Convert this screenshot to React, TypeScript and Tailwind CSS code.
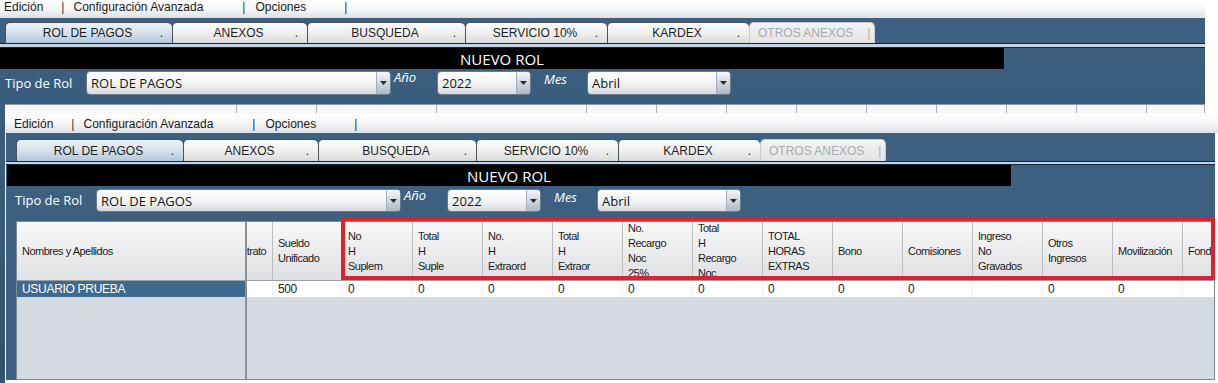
import React from 'react';

type TabKind = 'on' | 'off' | 'dis';

const TABS: { label: string; w: string; kind: TabKind }[] = [
  { label: 'ROL DE PAGOS', w: 'w-[167px]', kind: 'on' },
  { label: 'ANEXOS', w: 'w-[135px]', kind: 'off' },
  { label: 'BUSQUEDA', w: 'w-[158px]', kind: 'off' },
  { label: 'SERVICIO 10%', w: 'w-[142px]', kind: 'off' },
  { label: 'KARDEX', w: 'w-[142px]', kind: 'off' },
  { label: 'OTROS ANEXOS', w: 'w-[126px]', kind: 'dis' },
];

// columns to the right of the frozen "Nombres y Apellidos" column
const COLS: { w: string; lines: string[]; val: string; clip?: boolean }[] = [
  { w: 'w-[26px]', lines: ['Contrato'], val: '', clip: true },
  { w: 'w-[70px]', lines: ['Sueldo', 'Unificado'], val: '500' },
  { w: 'w-[70px]', lines: ['No', 'H', 'Suplem'], val: '0' },
  { w: 'w-[70px]', lines: ['Total', 'H', 'Suple'], val: '0' },
  { w: 'w-[70px]', lines: ['No.', 'H', 'Extraord'], val: '0' },
  { w: 'w-[70px]', lines: ['Total', 'H', 'Extraor'], val: '0' },
  { w: 'w-[70px]', lines: ['No.', 'Recargo', 'Noc', '25%'], val: '0' },
  { w: 'w-[70px]', lines: ['Total', 'H', 'Recargo', 'Noc'], val: '0' },
  { w: 'w-[70px]', lines: ['TOTAL', 'HORAS', 'EXTRAS'], val: '0' },
  { w: 'w-[70px]', lines: ['Bono'], val: '0' },
  { w: 'w-[70px]', lines: ['Comisiones'], val: '0' },
  { w: 'w-[70px]', lines: ['Ingreso', 'No', 'Gravados'], val: '' },
  { w: 'w-[70px]', lines: ['Otros', 'Ingresos'], val: '0' },
  { w: 'w-[70px]', lines: ['Movilización'], val: '0' },
  { w: 'w-[70px]', lines: ['Fondo'], val: '' },
];

const BACK_COLS = [
  'w-[232px]', 'w-[80px]', 'w-[120px]', 'w-[150px]',
  'w-[70px]', 'w-[70px]', 'w-[70px]', 'w-[70px]',
  'w-[70px]', 'w-[70px]', 'w-[70px]', 'w-[70px]', 'w-[58px]',
];

const MenuBar = ({ front }: { front: boolean }) => (
  <div
    className={`flex shrink-0 items-start bg-gradient-to-b from-[#ffffff] via-[#f6f7f8] to-[#dce1e6] text-[12px] leading-[14px] text-[#1a1a1a] font-['Liberation_Sans',Arial,sans-serif] ${
      front ? 'h-[20px] pl-[8px] pt-[4px] -mr-[3px]' : 'h-[18px] pl-[4px]'
    }`}
  >
    <span>Edición</span>
    <span className="ml-[18px] text-[#333333]">|</span>
    <span className="ml-[9px]">Configuración Avanzada</span>
    <span className="ml-[39px] text-[#333333]">|</span>
    <span className="ml-[10px]">Opciones</span>
    <span className="ml-[38px] text-[#333333]">|</span>
  </div>
);

const TabStrip = ({ front }: { front: boolean }) => (
  <div className={`flex shrink-0 ${front ? 'h-[28px] pl-[10px] pt-[6px]' : 'h-[25px] pl-[5px] pt-[4px]'}`}>
    {TABS.map((t) => {
      if (t.kind === 'dis') {
        return (
          <div
            key={t.label}
            className={`flex ${t.w} items-center rounded-t-[5px] border-x border-t border-[#c7cbd0] bg-gradient-to-b from-[#f4f4f4] to-[#e2e3e5] pl-[8px] text-[12px] text-[#a9abae] font-['Liberation_Sans',Arial,sans-serif]`}
          >
            <span>{t.label}</span>
            <span className="ml-[14px]">|</span>
          </div>
        );
      }
      return (
        <div
          key={t.label}
          className={`grid ${t.w} grid-cols-[1fr_auto_1fr] items-center rounded-t-[5px] border-l border-t border-[#4b525a] text-[12px] text-[#1e1e1e] font-['Liberation_Sans',Arial,sans-serif] ${
            t.kind === 'on'
              ? 'bg-gradient-to-b from-[#edf2f7] via-[#d6e1ec] to-[#b3c7da]'
              : 'bg-gradient-to-b from-[#fcfcfc] via-[#f0f0f0] to-[#d9dadc]'
          }`}
        >
          <span />
          <span className="-ml-[3px]">{t.label}</span>
          <span className="justify-self-end pr-[9px]">.</span>
        </div>
      );
    })}
  </div>
);

const Combo = ({ value, w, h }: { value: string; w: string; h: string }) => (
  <div
    className={`flex ${w} ${h} overflow-hidden rounded-[4px] border border-[#6e7c8a] bg-gradient-to-b from-[#ffffff] via-[#f3f4f5] to-[#d8dbdf]`}
  >
    <span className="flex flex-1 items-center pl-[4px] pt-[2px] text-[13px] text-[#141414] font-['Open_Sans',sans-serif]">
      {value}
    </span>
    <span className="flex w-[14px] items-center justify-center border-l border-[#a2aebb] bg-gradient-to-b from-[#f5f7f9] to-[#abbac8]">
      <svg width="7" height="4" viewBox="0 0 7 4">
        <path d="M0 0h7L3.5 4z" fill="#2b2b2b" />
      </svg>
    </span>
  </div>
);

const FilterRow = ({ front }: { front: boolean }) => {
  const h = front ? 'h-[23px]' : 'h-[24px]';
  return (
    <div
      className={`flex shrink-0 items-center text-[13px] text-white font-['Open_Sans',sans-serif] ${
        front ? 'mt-[2px] h-[25px] pl-[9px]' : 'mt-[1px] h-[26px] pl-[5px]'
      }`}
    >
      <span className="w-[81px] pt-[1px]">Tipo de Rol</span>
      <Combo value="ROL DE PAGOS" w="w-[305px]" h={h} />
      <span className="mt-[1px] w-[46px] self-start pl-[3px] italic leading-[13px]">Año</span>
      <Combo value="2022" w="w-[94px]" h={h} />
      <span className="mt-[3px] w-[56px] self-start pl-[13px] italic leading-[13px]">Mes</span>
      <Combo value="Abril" w="w-[144px]" h={h} />
    </div>
  );
};

const FrontTable = () => (
  <div className="ml-[10px] mt-[8px] flex min-h-0 flex-1 border border-[#7d8995] bg-[#d5d9e0] text-[11px] tracking-[-0.5px] text-[#1b1b1b] font-['Liberation_Sans',Arial,sans-serif]">
    <div className="flex w-[230px] shrink-0 flex-col border-r-2 border-[#8c9095]">
      <div className="flex h-[59px] items-center border-b border-[#9b9fa4] bg-gradient-to-b from-[#f8f8f8] to-[#e0e1e4] pl-[5px]">
        Nombres y Apellidos
      </div>
      <div className="flex h-[16px] items-center bg-[#3f6a8f] pl-[5px] text-[12px] tracking-[-0.3px] text-white">
        USUARIO PRUEBA
      </div>
    </div>
    <div className="flex min-w-0 flex-1 flex-col overflow-hidden">
      <div className="flex h-[59px] shrink-0 border-b border-[#9b9fa4] bg-gradient-to-b from-[#f8f8f8] to-[#dfe0e3]">
        {COLS.map((c, i) => (
          <div
            key={i}
            className={`flex ${c.w} shrink-0 flex-col justify-center overflow-hidden border-r border-[#babdc1] leading-[15px] ${
              c.clip ? '' : 'pl-[5px]'
            }`}
          >
            {c.lines.map((l, j) => (
              <span key={j} className={`whitespace-nowrap ${c.clip ? '-ml-[19px]' : ''}`}>
                {l}
              </span>
            ))}
          </div>
        ))}
      </div>
      <div className="flex h-[16px] shrink-0 bg-white text-[12px] tracking-[-0.4px]">
        {COLS.map((c, i) => (
          <div key={i} className={`flex ${c.w} shrink-0 items-center border-r border-[#f1f1f1] pl-[5px]`}>
            {c.val}
          </div>
        ))}
      </div>
    </div>
  </div>
);

const BackTable = () => (
  <div className="ml-[5px] mt-[8px] flex min-h-0 flex-1 flex-col bg-white">
    <div className="flex h-[60px] shrink-0 border-t border-[#8d98a3] bg-gradient-to-b from-[#f9f9f9] to-[#e1e2e5]">
      {BACK_COLS.map((w, i) => (
        <div key={i} className={`${w} shrink-0 border-r border-[#a9acb0]`} />
      ))}
    </div>
  </div>
);

const RolWindow = ({ front }: { front: boolean }) => (
  <div
    className={
      front
        ? 'absolute left-[6px] top-[113px] flex h-[267px] w-[1209px] flex-col bg-[#3d5f80]'
        : 'flex h-[383px] w-[1205px] flex-col bg-gradient-to-b from-[#3e6182] to-[#33526f]'
    }
  >
    <MenuBar front={front} />
    <TabStrip front={front} />
    <div className={`shrink-0 border-y border-[#14263a] bg-[#c4d4e4] ${front ? 'h-[4px]' : 'h-[5px]'}`} />
    <div className="flex h-[21px] shrink-0">
      <div
        className={`w-[1004px] bg-black text-center text-[15px] leading-[22px] text-white font-['Open_Sans',sans-serif] ${
          front ? 'ml-[1px]' : ''
        }`}
      >
        NUEVO ROL
      </div>
    </div>
    <FilterRow front={front} />
    {front ? <FrontTable /> : <BackTable />}
  </div>
);

export default function App() {
  return (
    <div className="relative h-[383px] w-[1218px] overflow-hidden bg-white">
      <RolWindow front={false} />
      <RolWindow front />
      {/* red highlight drawn over the extra-hours columns */}
      <div className="absolute left-[341px] top-[217px] h-[63px] w-[874px] border-4 border-[#e2202b]" />
    </div>
  );
}
